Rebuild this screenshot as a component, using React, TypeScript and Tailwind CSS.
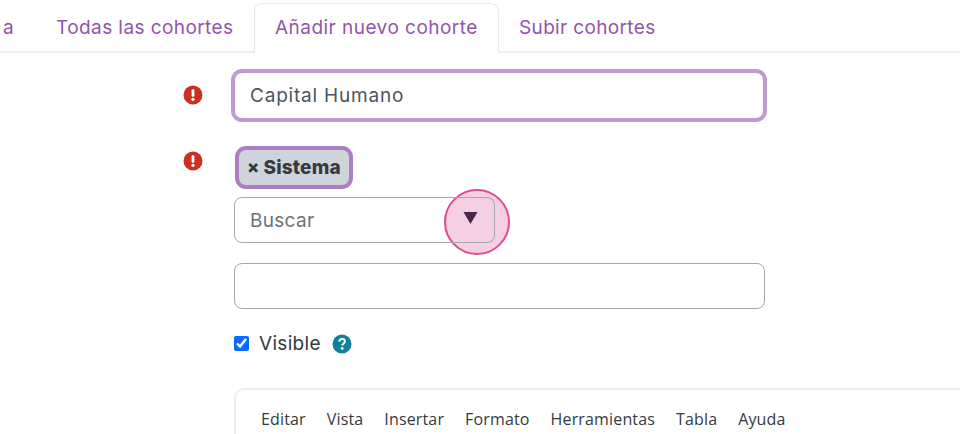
import React from 'react'

const ErrorIcon = () => (
  <svg viewBox="0 0 20 20" className="w-[20px] h-[20px] shrink-0">
    <circle cx="10" cy="10" r="9.5" fill="#ca3120" />
    <rect x="8.6" y="4.2" width="2.8" height="7.6" rx="1.2" fill="#fff" />
    <circle cx="10" cy="14.3" r="1.6" fill="#fff" />
  </svg>
)

const menuItems = ['Editar', 'Vista', 'Insertar', 'Formato', 'Herramientas', 'Tabla', 'Ayuda']

export default function App() {
  return (
    <div className="w-[960px] h-[434px] overflow-hidden bg-white font-['Inter','Liberation_Sans',sans-serif] text-[#495057]">
      <div className="flex h-[53px] pt-[3px] border-b-2 border-[#eeedf3] text-[19px] text-[#9355a9] tracking-[0.35px]">
        <div className="w-[254px] shrink-0 flex items-center h-[48px] pt-[2px]">
          <span className="w-[14px] overflow-hidden flex justify-end">a</span>
          <span className="ml-[42px] tracking-[0.42px]">Todas las cohortes</span>
        </div>
        <div className="w-[245px] shrink-0 h-[50px] flex items-center pl-[20px] bg-white border border-b-0 border-[#e9e8ee] rounded-t-lg tracking-[0.47px]">
          Añadir nuevo cohorte
        </div>
        <div className="pl-[20px] h-[48px] pt-[2px] flex items-center">Subir cohortes</div>
      </div>

      <div className="pl-[183px] pt-[16px]">
        <div className="flex items-center">
          <div className="mb-[2px]">
            <ErrorIcon />
          </div>
          <div className="ml-[28px] w-[536px] h-[53px] flex items-center pl-[15px] pt-[2px] border-4 border-[#c09ad2] rounded-[11px] text-[19px] tracking-[0.8px] text-[#4b5563]">
            Capital Humano
          </div>
        </div>

        <div className="flex mt-[24px]">
          <div className="pt-[5px]">
            <ErrorIcon />
          </div>
          <div className="ml-[31px]">
            <div className="ml-[1px] w-[118px] h-[43px] flex items-center justify-center gap-[4px] pt-[1px] bg-[#ced4da] border-4 border-[#ad7dc5] rounded-[11px] text-[19px] font-extrabold text-[#343a40]">
              <span className="text-[18px] leading-[20px] mb-[2px]">×</span>
              <span className="tracking-[0.2px]">Sistema</span>
            </div>
            <div className="relative mt-[8px] w-[261px] h-[46px] flex items-center pl-[15px] pt-[2px] border border-[#a5a7ad] rounded-lg text-[19px] tracking-[0.3px] text-[#6a737b]">
              Buscar
              <div className="absolute left-[209px] top-[-9px] w-[66px] h-[66px] rounded-full border-2 border-[#df4c93] bg-[#f4d0e2]" />
              <div className="absolute left-[209px] top-[-1px] w-[51px] h-[46px] rounded-r-lg border border-l-0 border-[#a5a7ad]" />
              <svg viewBox="0 0 16 14" className="absolute left-[228px] top-[13px] w-[15px] h-[14px]">
                <path d="M0.5 0.5H15.5L8 13.5Z" fill="#472a45" />
              </svg>
            </div>
            <div className="mt-[20px] w-[531px] h-[46px] border border-[#a5a7ad] rounded-lg" />
            <div className="flex items-center mt-[22px] h-[24px]">
              <input type="checkbox" checked readOnly className="w-[15px] h-[15px] accent-[#0a6cff]" />
              <span className="ml-[10px] pt-[2px] text-[19px] tracking-[0.3px] text-[#343a40]">Visible</span>
              <svg viewBox="0 0 20 20" className="ml-[11px] mt-[2px] w-[20px] h-[20px]">
                <circle cx="10" cy="10" r="9.5" fill="#0f8299" />
                <path d="M7.2 7.6C7.3 5.9 8.5 5 10.1 5C11.8 5 12.9 6 12.9 7.4C12.9 9.4 10.2 9.5 10.2 11.5" fill="none" stroke="#fff" strokeWidth="2" />
                <circle cx="10.2" cy="14.4" r="1.4" fill="#fff" />
              </svg>
            </div>
            <div className="mt-[33px] w-[800px] h-[60px] border-2 border-[#eeeeee] rounded-tl-[10px] pl-[25px] pt-[17px] flex gap-[21px] text-[16px] leading-[24px] tracking-[0.15px] text-[#343a40] font-['Open_Sans',sans-serif]">
              {menuItems.map((item) => (
                <span key={item}>{item}</span>
              ))}
            </div>
          </div>
        </div>
      </div>
    </div>
  )
}
